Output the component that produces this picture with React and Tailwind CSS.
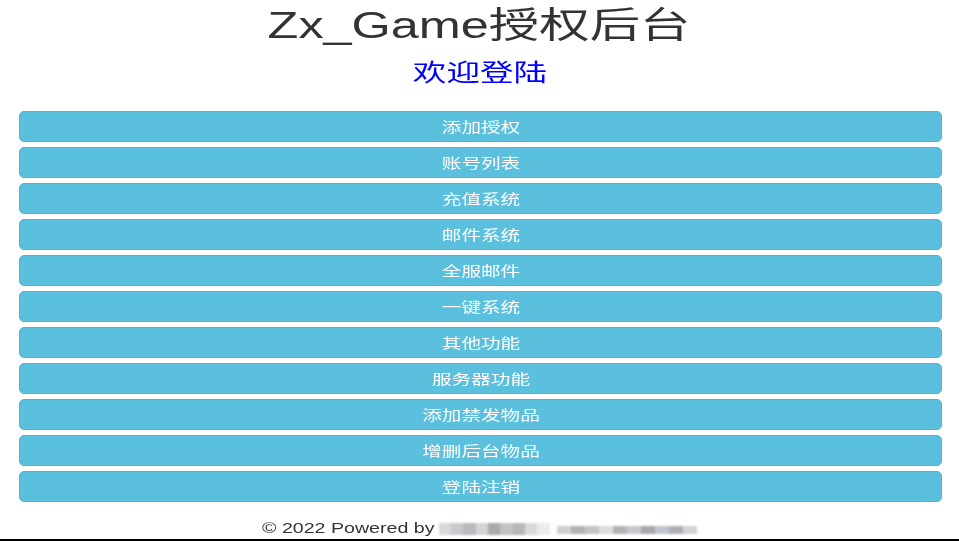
import React from "react";

const items = [
  "添加授权",
  "账号列表",
  "充值系统",
  "邮件系统",
  "全服邮件",
  "一键系统",
  "其他功能",
  "服务器功能",
  "添加禁发物品",
  "增删后台物品",
  "登陆注销",
];

const blurA = ["#d9d9dc", "#c9cacd", "#b9babd", "#d4d4d6", "#a9aaae", "#c4c2c0", "#b6b7ba", "#d9d9db", "#ececec"];
const blurB = ["#cfcfd1", "#b1b2b5", "#c2c3c5", "#dcdcde", "#b3b3b6", "#c6c8cb", "#a7a8ab", "#c0c4cc", "#adafb3", "#d2d3d5"];

const font = { fontFamily: '"Liberation Sans", Arial, "Noto Sans CJK SC", sans-serif' };

export default function App() {
  return (
    <div className="h-[541px] w-full bg-white flex flex-col overflow-hidden" style={font}>
      <h1 className="mt-[6px] h-[40px] text-center text-[36px] leading-[40px] text-[#333]">
        <span className="inline-block scale-x-[1.4]">Zx_Game授权后台</span>
      </h1>
      <h2 className="mt-[12px] h-[30px] text-center text-[24px] leading-[30px] text-[#0000ff]">
        <span className="inline-block scale-x-[1.4]">欢迎登陆</span>
      </h2>

      <div className="mt-[23px] pl-[19px] pr-[17px] flex flex-col gap-[5px]">
        {items.map((label) => (
          <button
            key={label}
            className="h-[31px] w-full rounded-[5px] border border-[#46b8da] bg-[#5bc0de] text-white text-[14px] leading-[20px] flex items-center justify-center"
          >
            <span className="inline-block scale-x-[1.4]">{label}</span>
          </button>
        ))}
      </div>

      <div className="mt-[16px] h-[21px] flex items-center justify-center text-[14px] text-[#333]">
        <span className="inline-block scale-x-[1.4] origin-left mr-[53px]">© 2022 Powered by</span>
        <span className="flex items-center gap-[7px] blur-[1px]">
          <span className="flex h-[12px] w-[111px]">
            {blurA.map((c, i) => (
              <span key={i} className="flex-1" style={{ backgroundColor: c }} />
            ))}
          </span>
          <span className="flex h-[8px] w-[140px] mt-[3px]">
            {blurB.map((c, i) => (
              <span key={i} className="flex-1" style={{ backgroundColor: c }} />
            ))}
          </span>
        </span>
      </div>
      <div className="mt-auto h-[2px] w-full bg-black" />
    </div>
  );
}
